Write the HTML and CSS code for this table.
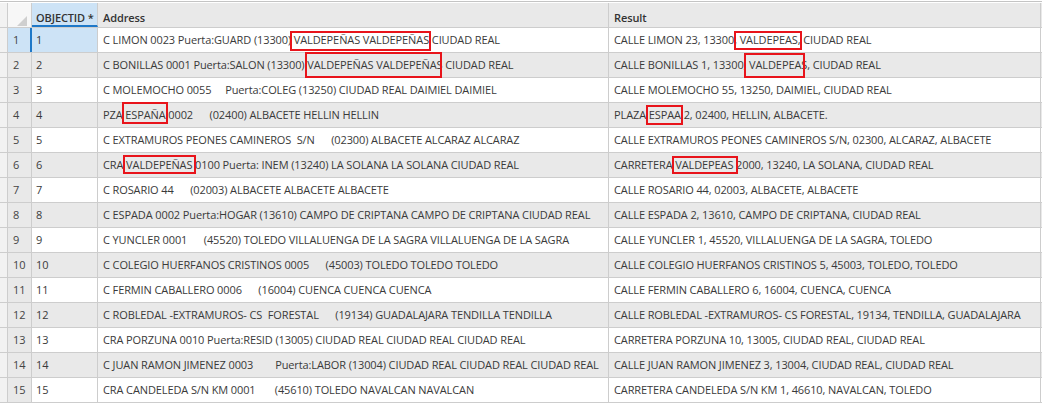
FILE: index.html
```html
<!DOCTYPE html>
<html lang="es">
<head>
<meta charset="utf-8">
<title>Tabla</title>
<link rel="stylesheet" href="styles.css">
</head>
<body>
<div class="grid">
  <div class="row head">
    <div class="cell gutter"></div>
    <div class="cell num corner"><span class="tri"></span></div>
    <div class="cell oid sel">OBJECTID *</div>
    <div class="cell addr">Address</div>
    <div class="cell res">Result</div>
  </div>
  <div class="row active">
    <div class="cell gutter"></div><div class="cell num">1</div><div class="cell oid">1</div>
    <div class="cell addr">C LIMON 0023 Puerta:GUARD (13300) VALDEPEÑAS VALDEPEÑAS CIUDAD REAL</div>
    <div class="cell res">CALLE LIMON 23, 13300, VALDEPEAS, CIUDAD REAL</div>
  </div>
  <div class="row alt">
    <div class="cell gutter"></div><div class="cell num">2</div><div class="cell oid">2</div>
    <div class="cell addr">C BONILLAS 0001 Puerta:SALON (13300) VALDEPEÑAS VALDEPEÑAS CIUDAD REAL</div>
    <div class="cell res">CALLE BONILLAS 1, 13300, VALDEPEAS, CIUDAD REAL</div>
  </div>
  <div class="row">
    <div class="cell gutter"></div><div class="cell num">3</div><div class="cell oid">3</div>
    <div class="cell addr">C MOLEMOCHO 0055     Puerta:COLEG (13250) CIUDAD REAL DAIMIEL DAIMIEL</div>
    <div class="cell res">CALLE MOLEMOCHO 55, 13250, DAIMIEL, CIUDAD REAL</div>
  </div>
  <div class="row alt">
    <div class="cell gutter"></div><div class="cell num">4</div><div class="cell oid">4</div>
    <div class="cell addr">PZA ESPAÑA 0002      (02400) ALBACETE HELLIN HELLIN</div>
    <div class="cell res">PLAZA ESPAA 2, 02400, HELLIN, ALBACETE.</div>
  </div>
  <div class="row">
    <div class="cell gutter"></div><div class="cell num">5</div><div class="cell oid">5</div>
    <div class="cell addr">C EXTRAMUROS PEONES CAMINEROS  S/N      (02300) ALBACETE ALCARAZ ALCARAZ</div>
    <div class="cell res">CALLE EXTRAMUROS PEONES CAMINEROS S/N, 02300, ALCARAZ, ALBACETE</div>
  </div>
  <div class="row alt">
    <div class="cell gutter"></div><div class="cell num">6</div><div class="cell oid">6</div>
    <div class="cell addr">CRA VALDEPEÑAS 0100 Puerta: INEM (13240) LA SOLANA LA SOLANA CIUDAD REAL</div>
    <div class="cell res">CARRETERA VALDEPEAS 2000, 13240, LA SOLANA, CIUDAD REAL</div>
  </div>
  <div class="row">
    <div class="cell gutter"></div><div class="cell num">7</div><div class="cell oid">7</div>
    <div class="cell addr">C ROSARIO 44      (02003) ALBACETE ALBACETE ALBACETE</div>
    <div class="cell res">CALLE ROSARIO 44, 02003, ALBACETE, ALBACETE</div>
  </div>
  <div class="row alt">
    <div class="cell gutter"></div><div class="cell num">8</div><div class="cell oid">8</div>
    <div class="cell addr">C ESPADA 0002 Puerta:HOGAR (13610) CAMPO DE CRIPTANA CAMPO DE CRIPTANA CIUDAD REAL</div>
    <div class="cell res">CALLE ESPADA 2, 13610, CAMPO DE CRIPTANA, CIUDAD REAL</div>
  </div>
  <div class="row">
    <div class="cell gutter"></div><div class="cell num">9</div><div class="cell oid">9</div>
    <div class="cell addr">C YUNCLER 0001      (45520) TOLEDO VILLALUENGA DE LA SAGRA VILLALUENGA DE LA SAGRA</div>
    <div class="cell res">CALLE YUNCLER 1, 45520, VILLALUENGA DE LA SAGRA, TOLEDO</div>
  </div>
  <div class="row alt">
    <div class="cell gutter"></div><div class="cell num">10</div><div class="cell oid">10</div>
    <div class="cell addr">C COLEGIO HUERFANOS CRISTINOS 0005      (45003) TOLEDO TOLEDO TOLEDO</div>
    <div class="cell res">CALLE COLEGIO HUERFANOS CRISTINOS 5, 45003, TOLEDO, TOLEDO</div>
  </div>
  <div class="row">
    <div class="cell gutter"></div><div class="cell num">11</div><div class="cell oid">11</div>
    <div class="cell addr">C FERMIN CABALLERO 0006      (16004) CUENCA CUENCA CUENCA</div>
    <div class="cell res">CALLE FERMIN CABALLERO 6, 16004, CUENCA, CUENCA</div>
  </div>
  <div class="row alt">
    <div class="cell gutter"></div><div class="cell num">12</div><div class="cell oid">12</div>
    <div class="cell addr">C ROBLEDAL -EXTRAMUROS- CS  FORESTAL      (19134) GUADALAJARA TENDILLA TENDILLA</div>
    <div class="cell res">CALLE ROBLEDAL -EXTRAMUROS- CS FORESTAL, 19134, TENDILLA, GUADALAJARA</div>
  </div>
  <div class="row">
    <div class="cell gutter"></div><div class="cell num">13</div><div class="cell oid">13</div>
    <div class="cell addr">CRA PORZUNA 0010 Puerta:RESID (13005) CIUDAD REAL CIUDAD REAL CIUDAD REAL</div>
    <div class="cell res">CARRETERA PORZUNA 10, 13005, CIUDAD REAL, CIUDAD REAL</div>
  </div>
  <div class="row alt">
    <div class="cell gutter"></div><div class="cell num">14</div><div class="cell oid">14</div>
    <div class="cell addr">C JUAN RAMON JIMENEZ 0003        Puerta:LABOR (13004) CIUDAD REAL CIUDAD REAL CIUDAD REAL</div>
    <div class="cell res">CALLE JUAN RAMON JIMENEZ 3, 13004, CIUDAD REAL, CIUDAD REAL</div>
  </div>
  <div class="row">
    <div class="cell gutter"></div><div class="cell num">15</div><div class="cell oid">15</div>
    <div class="cell addr">CRA CANDELEDA S/N KM 0001       (45610) TOLEDO NAVALCAN NAVALCAN</div>
    <div class="cell res">CARRETERA CANDELEDA S/N KM 1, 46610, NAVALCAN, TOLEDO</div>
  </div>

  <div class="mark m1a"></div>
  <div class="mark m1r"></div>
  <div class="mark m2a"></div>
  <div class="mark m2r"></div>
  <div class="mark m4a"></div>
  <div class="mark m4r"></div>
  <div class="mark m6a"></div>
  <div class="mark m6r"></div>
</div>
</body>
</html>
```

FILE: styles.css
```css
* { box-sizing: border-box; }
html, body { margin: 0; padding: 0; background: #ffffff; }
body {
  font-family: "Open Sans", "Noto Sans", sans-serif;
  font-size: 11px;
  letter-spacing: -0.11px;
  color: #3a3a3a;
}
.grid {
  position: relative;
  width: 1042px;
  height: 405px;
  margin-top: 1px;
  border-top: 1px solid #c4c4c4;
  padding-top: 1px;
  background: #ffffff;
}
.row {
  display: grid;
  grid-template-columns: 8px 24px 66px 511px 432px;
  height: 25px;
  border-bottom: 1px solid #cdcdcd;
  background: #ffffff;
}
.row.head {
  height: 25px;
  background: #e9e9e9;
  font-weight: 600;
  color: #333333;
}
.row.alt { background: #e9e9e9; }
.cell {
  border-right: 1px solid #cdcdcd;
  padding: 0 4px;
  white-space: pre;
  overflow: hidden;
  display: flex;
  align-items: center;
  line-height: 16px;
}
.cell.gutter { background: #f2f2f2; padding: 0; }
.cell.num { background: #e9e9e9; padding-left: 5px; color: #444444; }
.cell.oid { padding-left: 4px; }
.cell.addr, .cell.res { padding-left: 5px; }
.head .cell { padding-top: 5px; }
.head .corner { background: #f7f7f7; position: relative; }
.tri {
  position: absolute;
  right: 4px;
  bottom: 1px;
  width: 0;
  height: 0;
  border-left: 10px solid transparent;
  border-bottom: 10px solid #cfcfcf;
}
.head .sel {
  background: #cde3f6;
  border-bottom: 2px solid #1e78c8;
  padding-top: 7px;
}
.row.active .num { background: #cde3f6; border-right: 2px solid #1e78c8; }
.row.active .oid { background: #cde3f6; }

.mark {
  position: absolute;
  border: 2px solid #e8141b;
}
.m1a { left: 290px; top: 29px; width: 141px; height: 20px; }
.m1r { left: 734px; top: 29px; width: 68px; height: 19px; }
.m2a { left: 305px; top: 50px; width: 137px; height: 26px; }
.m2r { left: 744px; top: 51px; width: 61px; height: 25px; }
.m4a { left: 122px; top: 100px; width: 46px; height: 22px; }
.m4r { left: 646px; top: 103px; width: 37px; height: 20px; }
.m6a { left: 123px; top: 153px; width: 73px; height: 19px; }
.m6r { left: 672px; top: 154px; width: 66px; height: 18px; }
```
